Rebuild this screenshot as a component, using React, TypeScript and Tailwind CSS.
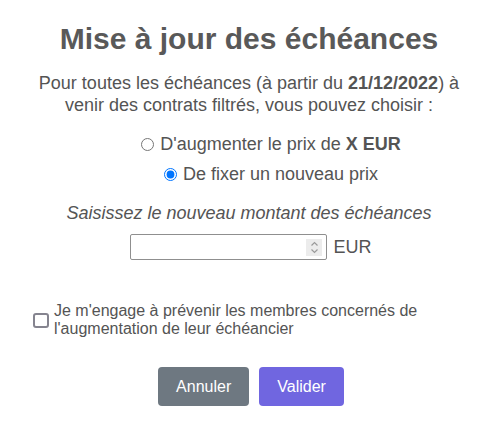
import React, { useState } from 'react';

const font = { fontFamily: '"Liberation Sans", Arial, sans-serif' };

const Spinner: React.FC = () => (
  <div className="flex items-center justify-center w-[16px] h-[17px] bg-[#ececec] mr-[4px]">
    <svg width="9" height="15" viewBox="0 0 9 15" fill="none" stroke="#9a9a9a" strokeWidth="1.2">
      <path d="M1.5 5.5 L4.5 2.5 L7.5 5.5" />
      <path d="M1.5 9.5 L4.5 12.5 L7.5 9.5" />
    </svg>
  </div>
);

const App: React.FC = () => {
  const [choice, setChoice] = useState<'add' | 'fix'>('fix');
  const [agree, setAgree] = useState(false);

  return (
    <div className="w-[498px] h-[424px] bg-white text-[#545454] flex flex-col items-center" style={font}>
      <h2 className="mt-[21px] text-[30px] leading-[36px] font-bold text-[#595959]">
        Mise à jour des échéances
      </h2>

      <p className="mt-[15px] w-[440px] text-center text-[18px] leading-[22px]">
        Pour toutes les échéances (à partir du <b>21/12/2022</b>) à venir des contrats filtrés, vous pouvez choisir :
      </p>

      {/* Radio choices */}
      <div className="mt-[17px] ml-[44px] flex flex-col items-center gap-[8px] text-[18px] leading-[22px]">
        <label className="flex items-center gap-[6px]">
          <input
            type="radio"
            name="mode"
            checked={choice === 'add'}
            onChange={() => setChoice('add')}
            className="m-0 w-[13px] h-[13px]"
          />
          <span>D'augmenter le prix de <b>X EUR</b></span>
        </label>
        <label className="flex items-center gap-[6px]">
          <input
            type="radio"
            name="mode"
            checked={choice === 'fix'}
            onChange={() => setChoice('fix')}
            className="m-0 w-[13px] h-[13px]"
          />
          <span>De fixer un nouveau prix</span>
        </label>
      </div>

      <p className="mt-[17px] text-[18px] leading-[22px] italic">
        Saisissez le nouveau montant des échéances
      </p>

      <div className="mt-[10px] ml-[4px] flex items-center gap-[6px]">
        <div className="flex items-center w-[197px] h-[26px] border border-[#8f8f8f] rounded-[2px] bg-white">
          <input type="text" className="flex-1 min-w-0 h-full px-2 outline-none bg-transparent" />
          <Spinner />
        </div>
        <span className="text-[18px] leading-[22px]">EUR</span>
      </div>

      {/* Engagement */}
      <label className="mt-[42px] self-start ml-[33px] flex items-center gap-[5px] text-[16px] leading-[18px]">
        <span
          onClick={() => setAgree(!agree)}
          className={`w-[16px] h-[15px] shrink-0 rounded-[3px] border-2 border-[#85848f] ${agree ? 'bg-[#0075ff]' : 'bg-white'}`}
        />
        <span className="w-[380px]">
          Je m'engage à prévenir les membres concernés de l'augmentation de leur échéancier
        </span>
      </label>

      <div className="mt-[29px] ml-[4px] flex gap-[10px]">
        <button className="h-[39px] px-[18px] rounded-[4px] bg-[#6e7881] text-white text-[16px]">
          Annuler
        </button>
        <button className="h-[39px] px-[18px] rounded-[4px] bg-[#7066e0] text-white text-[16px]">
          Valider
        </button>
      </div>
    </div>
  );
};

export default App;
